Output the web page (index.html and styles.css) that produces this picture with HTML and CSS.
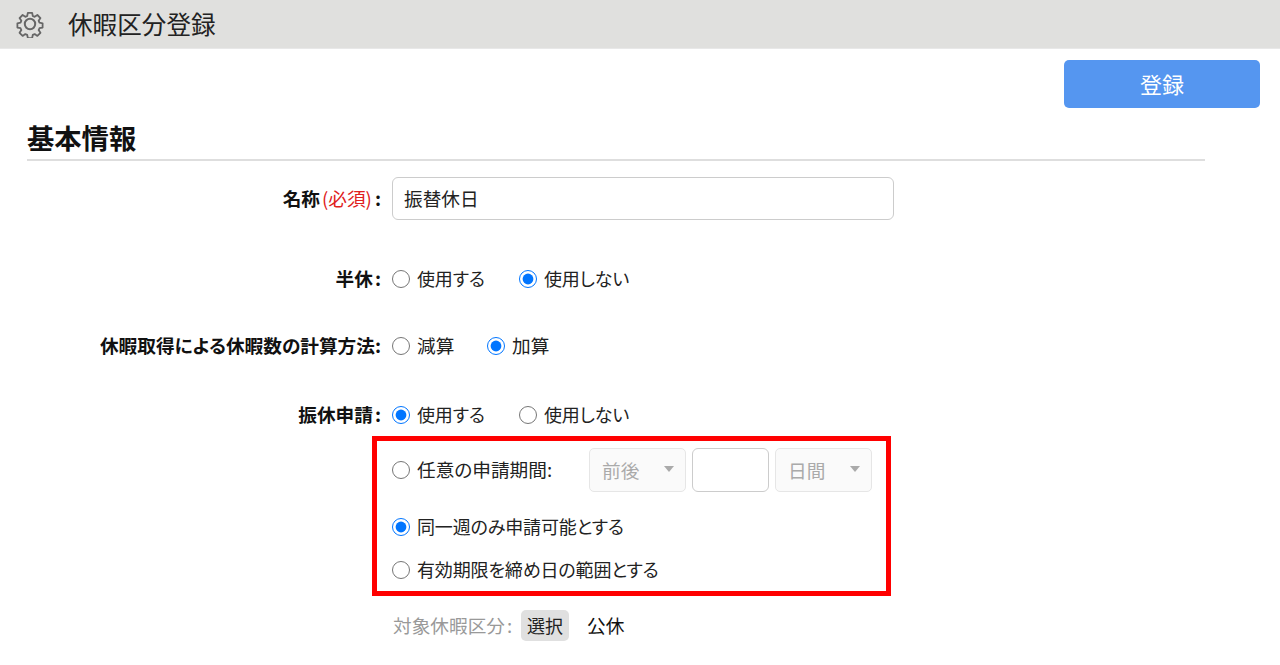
FILE: index.html
```html
<!DOCTYPE html>
<html lang="ja">
<head>
<meta charset="utf-8">
<title>休暇区分登録</title>
<link rel="stylesheet" href="styles.css">
</head>
<body>
<header class="topbar">
  <svg class="gear" viewBox="0 0 28 28" width="28" height="28" fill="none" stroke="#666" stroke-width="2" stroke-linejoin="round">
    <path d="M11.6 1.6h4.8l.7 3.5 2.1 .9 3-2 3.4 3.4-2 3 .9 2.1 3.5 .7v4.8l-3.5 .7-.9 2.1 2 3-3.4 3.4-3-2-2.1 .9-.7 3.5h-4.8l-.7-3.5-2.1-.9-3 2-3.4-3.4 2-3-.9-2.1-3.5-.7v-4.8l3.5-.7 .9-2.1-2-3 3.4-3.4 3 2 2.1-.9z" transform="translate(1.4 1.4) scale(.9)"/>
    <circle cx="14" cy="14" r="5.2"/>
  </svg>
  <h1 class="title">休暇区分登録</h1>
</header>
<div class="actions"><button class="save" type="button">登録</button></div>
<section class="panel">
  <h2 class="heading">基本情報</h2>
  <div class="row row-name">
    <div class="label">名称<span class="req">(必須)</span><span class="colon">:</span></div>
    <input class="text" type="text" value="振替休日">
  </div>
  <div class="row row-half">
    <div class="label">半休<span class="colon">:</span></div>
    <div class="choices">
      <label class="opt w1"><input type="radio" name="a">使用する</label>
      <label class="opt"><input type="radio" name="a" checked>使用しない</label>
    </div>
  </div>
  <div class="row row-calc">
    <div class="label">休暇取得による休暇数の計算方法:</div>
    <div class="choices">
      <label class="opt w2 wide"><input type="radio" name="b">減算</label>
      <label class="opt wide"><input type="radio" name="b" checked>加算</label>
    </div>
  </div>
  <div class="row row-sub">
    <div class="label">振休申請<span class="colon">:</span></div>
    <div class="choices">
      <label class="opt w1"><input type="radio" name="c" checked>使用する</label>
      <label class="opt"><input type="radio" name="c">使用しない</label>
    </div>
  </div>
  <div class="highlight">
    <div class="period">
      <label class="opt w3 wide"><input type="radio" name="d">任意の申請期間:</label>
      <div class="select"><span class="lift">前後</span><i class="caret"></i></div>
      <input class="num" type="text">
      <div class="select"><span class="lift">日間</span><i class="caret"></i></div>
    </div>
    <label class="opt line-a"><input type="radio" name="d" checked>同一週のみ申請可能とする</label>
    <label class="opt line-b"><input type="radio" name="d">有効期限を締め日の範囲とする</label>
  </div>
  <div class="target">
    <span class="muted lift">対象休暇区分<span class="colon">:</span></span>
    <button class="pick" type="button">選択</button>
    <span class="value lift">公休</span>
  </div>
</section>
</body>
</html>
```
FILE: styles.css
```css
* { box-sizing: border-box; }
html, body { margin: 0; height: 665px; overflow: hidden; background: #fff; }
body { font-family: "Noto Sans CJK JP", "Noto Sans", sans-serif; font-size: 18.67px; color: #222; font-feature-settings: "palt"; }
.topbar { height: 49px; background: #e0e0de; border-bottom: 1px solid #e8e8e8; display: flex; align-items: center; padding-left: 16px; }
.gear { flex: none; }
.title { margin: 0 0 0 24px; padding-bottom: 2px; font-size: 24.6px; font-weight: 400; line-height: 1; color: #222; font-feature-settings: normal; }
.actions { display: flex; justify-content: flex-end; padding: 11px 20px 0 0; }
.save { width: 196px; height: 48px; padding: 0 0 2px; border: 0; border-radius: 5px; background: #5596f0; color: #fff; font: inherit; font-size: 22px; font-feature-settings: normal; }
.panel { margin-left: 27px; width: 1178px; }
.heading { margin: 13px 0 0; height: 40px; border-bottom: 2px solid #dedede; font-size: 27.3px; font-weight: 700; line-height: 32px; color: #111; font-feature-settings: normal; }
.row { display: flex; align-items: center; }
.label { width: 354px; text-align: right; font-weight: 700; color: #111; white-space: nowrap; line-height: 24px; }
.req { padding: 0 1px 0 2px; color: #e02020; font-weight: 400; }
.colon { margin-left: 2px; }
.row-name { margin-top: 16px; }
.row-name .label { margin-bottom: 2px; }
.text { margin-left: 11px; width: 502px; height: 43px; border: 1px solid #ccc; border-radius: 6px; padding: 0 11px 2px; font: inherit; color: #222; font-feature-settings: normal; }
.row-half { margin-top: 46px; }
.row-calc { margin-top: 43px; }
.row-sub { margin-top: 45px; }
.choices { display: flex; margin-left: 11px; }
.opt { display: flex; align-items: center; white-space: nowrap; line-height: 24px; font-size: 18px; letter-spacing: -.15px; }
.wide { font-size: 18.67px; letter-spacing: 0; }
.opt input { appearance: auto; width: 18px; height: 18px; margin: 2px 7px 0 0; flex: none; }
.w1 { width: 127px; }
.w2 { width: 95px; }
.w3 { width: 197px; margin-bottom: 2px; }
.highlight { margin: 10px 0 0 345px; width: 519px; height: 160px; border: 5px solid #f00; padding: 7px 0 0 15px; }
.period { display: flex; align-items: center; height: 44px; }
.select { width: 97px; height: 44px; border: 1px solid #e6e6e6; border-radius: 5px; background: #fafafa; color: #aaa; display: flex; align-items: center; justify-content: space-between; padding: 0 11px 0 12px; }
.caret { width: 0; height: 0; border-left: 5px solid transparent; border-right: 5px solid transparent; border-top: 6px solid #aaa; margin-bottom: 3px; }
.num { width: 77px; height: 44px; margin: 0 6px; border: 1px solid #ccc; border-radius: 6px; }
.lift { padding-bottom: 2px; }
.line-a { margin-top: 22px; }
.line-b { margin-top: 19px; }
.target { display: flex; align-items: center; margin: 14px 0 0 366px; }
.muted { color: #999; width: 128px; white-space: nowrap; }
.pick { width: 48px; height: 31px; padding: 0 0 2px; border: 0; border-radius: 5px; background: #e0e0e0; font: inherit; font-size: 18px; color: #222; }
.value { margin-left: 18px; color: #111; }
```
